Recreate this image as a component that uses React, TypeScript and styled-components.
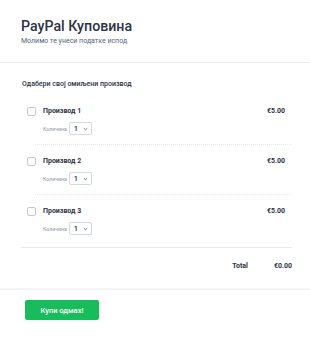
import React from "react";
import styled, { createGlobalStyle } from "styled-components";

const Global = createGlobalStyle`
  html, body { margin: 0; padding: 0; background: #fff; }
  body { font-family: Roboto, Inter, "Noto Sans", sans-serif; color: #2c3345; }
`;

const Page = styled.div`
  width: 310px;
  height: 337px;
  background: #fff;
  overflow: hidden;
`;

const Header = styled.header`
  padding: 17px 21px 0;
  height: 45px;
  border-bottom: 1px solid #eaebf0;
`;

const Title = styled.h1`
  margin: 0;
  font-size: 14.2px;
  font-weight: 500;
  line-height: 18px;
  color: #2c3345;
`;

const Subtitle = styled.div`
  margin-top: 1px;
  font-size: 7px;
  line-height: 10px;
  color: #57647e;
`;

const Section = styled.section`
  padding: 16px 18px 0 21px;
`;

const Label = styled.div`
  font-size: 7px;
  font-weight: 500;
  line-height: 10px;
  color: #2c3345;
  margin-left: 1px;
`;

const List = styled.div`
  margin-top: 6px;
  padding-bottom: 2px;
  border-bottom: 1px solid #eaebf0;
`;

const Item = styled.div<{ $last?: boolean }>`
  display: grid;
  grid-template-columns: 16px 1fr auto;
  align-items: start;
  padding: 0 7px 0 6px;
  height: 50px;
  position: relative;
  &::after {
    content: "";
    display: ${(p) => (p.$last ? "none" : "block")};
    position: absolute;
    left: 14px;
    right: 0;
    bottom: 0;
    border-bottom: 1px dotted #e6e8ec;
  }
`;

const Check = styled.span`
  width: 9px;
  height: 9px;
  border: 1px solid #c3cad8;
  border-radius: 2px;
  margin-top: 12px;
  box-sizing: border-box;
`;

const Info = styled.div`
  display: flex;
  flex-direction: column;
`;

const Name = styled.div`
  font-size: 7px;
  font-weight: 700;
  line-height: 10px;
  margin-top: 11px;
  color: #2c3345;
`;

const QtyRow = styled.div`
  display: flex;
  align-items: center;
  gap: 2px;
  margin-top: 6px;
`;

const QtyLabel = styled.span`
  font-size: 5.2px;
  color: #8a94a6;
`;

const Select = styled.div`
  width: 23px;
  height: 13px;
  box-sizing: border-box;
  border: 1px solid #d3d8e2;
  border-radius: 2px;
  display: flex;
  align-items: center;
  justify-content: space-between;
  padding: 0 3px 0 4px;
  font-size: 7.5px;
  font-weight: 500;
  color: #2c3345;
`;

const Price = styled.div`
  font-size: 7px;
  font-weight: 700;
  line-height: 10px;
  margin-top: 11px;
  color: #2c3345;
`;

const TotalRow = styled.div`
  display: flex;
  justify-content: flex-end;
  align-items: flex-start;
  height: 40px;
  box-sizing: border-box;
  padding-top: 13px;
  gap: 26px;
  font-size: 7px;
  line-height: 10px;
  font-weight: 700;
  color: #2c3345;
`;

const Footer = styled.div`
  border-top: 2px solid #f3f4f7;
  padding: 10px 25px;
`;

const Button = styled.button`
  display: block;
  width: 74px;
  height: 20px;
  border: none;
  border-radius: 2px;
  background: #18bd5b;
  color: #fff;
  font-family: Roboto, Inter, "Noto Sans", sans-serif;
  font-size: 7.5px;
  font-weight: 500;
  padding: 0;
`;

const Chevron = () => (
  <svg width="5" height="4" viewBox="0 0 5 4">
    <path d="M0.8 1.2 L2.5 2.8 L4.2 1.2" fill="none" stroke="#57647e" strokeWidth="0.8" />
  </svg>
);

const products = ["Производ 1", "Производ 2", "Производ 3"];

export default function App() {
  return (
    <Page>
      <Global />
      <Header>
        <Title>PayPal Куповина</Title>
        <Subtitle>Молимо те унеси податке испод</Subtitle>
      </Header>
      <Section>
        <Label>Одабери свој омиљени производ</Label>
        <List>
          {products.map((p, i) => (
            <Item key={p} $last={i === products.length - 1}>
              <Check />
              <Info>
                <Name>{p}</Name>
                <QtyRow>
                  <QtyLabel>Количина</QtyLabel>
                  <Select>
                    1 <Chevron />
                  </Select>
                </QtyRow>
              </Info>
              <Price>€5.00</Price>
            </Item>
          ))}
        </List>
        <TotalRow>
          <span>Total</span>
          <span>€0.00</span>
        </TotalRow>
      </Section>
      <Footer>
        <Button>Купи одмах!</Button>
      </Footer>
    </Page>
  );
}
